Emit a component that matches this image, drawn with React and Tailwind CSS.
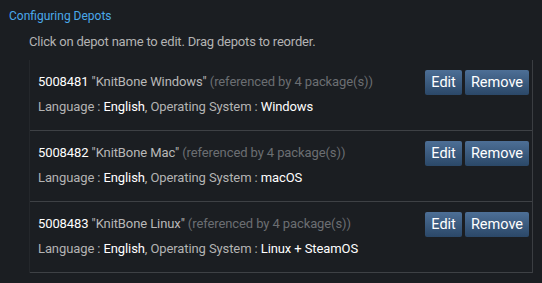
const depots = [
  { id: '5008481', name: 'KnitBone Windows', os: 'Windows' },
  { id: '5008482', name: 'KnitBone Mac', os: 'macOS' },
  { id: '5008483', name: 'KnitBone Linux', os: 'Linux + SteamOS' },
];

export default function App() {
  return (
    <div className="w-[542px] h-[283px] bg-[#1b1e22] font-['Roboto',sans-serif] overflow-hidden">
      <div className="pl-[9px] pt-[7px] text-[12px] leading-[18px] text-[#4aa9ea]">Configuring Depots</div>
      <div className="pl-[29px] pt-[8px] text-[13px] leading-[18px] tracking-[-0.2px] text-[#b3b3b3]">
        Click on depot name to edit. Drag depots to reorder.
      </div>
      <div className="ml-[29px] w-[504px] mt-[9px] border-l border-r border-l-[#24272b] border-r-[#3b3e42]">
        {depots.map((d) => (
          <div key={d.id} className="h-[71px] border-b border-[#3e4145] flex items-start justify-between pl-[8px] pr-[3px] pt-[10px]">
            <div className="text-[13px] leading-[18px] pt-[3px] tracking-[-0.1px]">
              <div>
                <span className="text-white">{d.id}</span>{' '}
                <span className="text-[#b8b8b8]">"{d.name}"</span>{' '}
                <span className="text-[#6b6e72]">(referenced by 4 package(s))</span>
              </div>
              <div className="mt-[7px] text-[#b3b3b3]">
                Language : <span className="text-white">English</span>, Operating System : <span className="text-white">{d.os}</span>
              </div>
            </div>
            <div className="flex gap-[3px]">
              <DepotButton label="Edit" />
              <DepotButton label="Remove" />
            </div>
          </div>
        ))}
      </div>
    </div>
  );
}

function DepotButton({ label }) {
  return (
    <button className="h-[25px] px-[6px] rounded-[2px] bg-gradient-to-b from-[#4d6f96] to-[#2b4868] text-white text-[14.5px] leading-[25px]">
      {label}
    </button>
  );
}
